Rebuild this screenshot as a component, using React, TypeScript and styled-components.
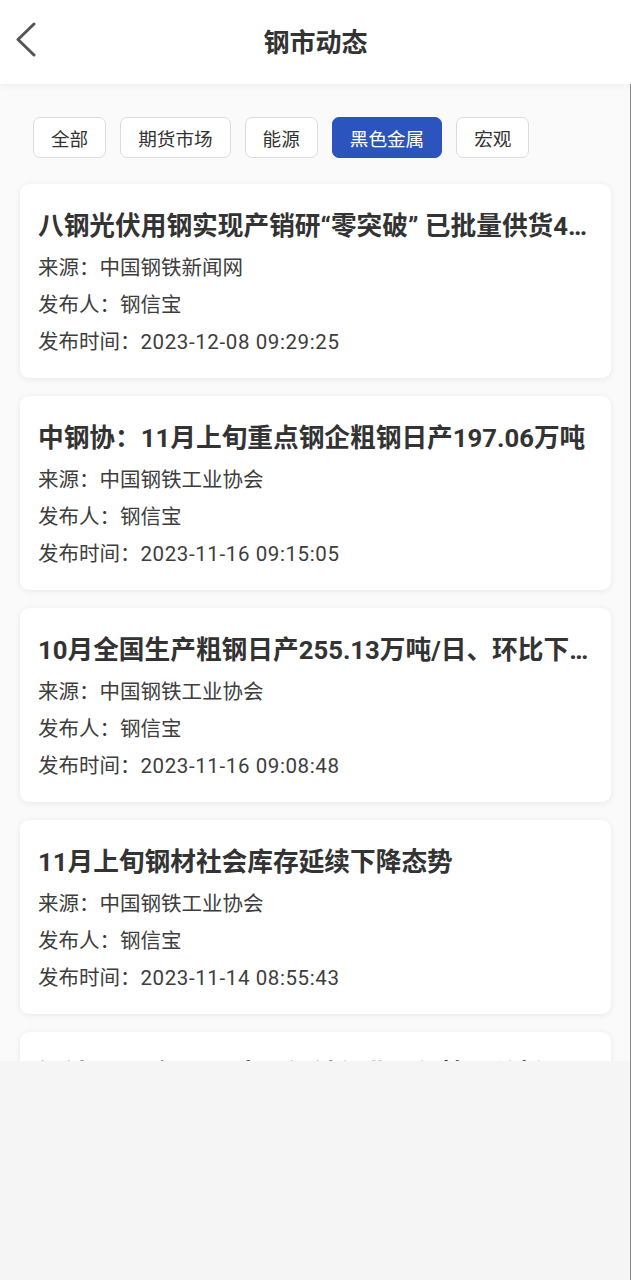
import React from 'react'
import styled, { createGlobalStyle } from 'styled-components'

interface NewsItem {
    title: string
    source: string
    publisher: string
    time: string
}

const GlobalStyle = createGlobalStyle`
    body {
        margin: 0;
        background: #f5f5f5;
        font-family: Roboto, "Noto Sans CJK SC", sans-serif;
    }
`

const Page = styled.div`
    height: 1280px;
    background: #f5f5f5;
    box-shadow: inset -1px 0 0 #8a8a8a;
    overflow: hidden;
`

const Header = styled.header`
    position: relative;
    z-index: 1;
    height: 84px;
    display: grid;
    grid-template-columns: 70px 1fr 70px;
    align-items: center;
    background: #fff;
    box-shadow: 0 2px 8px rgba(0, 0, 0, 0.05);
`

const BackButton = styled.button`
    width: 40px;
    height: 40px;
    margin: 0 0 4px 8px;
    padding: 0;
    border: none;
    background: none;
    display: flex;
    align-items: center;
    justify-content: center;
`

const Title = styled.h1`
    margin: 0 0 4px;
    text-align: center;
    font-size: 26px;
    font-weight: 700;
    color: #333;
`

const Content = styled.main`
    height: 977px;
    overflow: hidden;
    background: #fafafa;
    box-shadow: inset -1px 0 0 #8a8a8a;
`

const Tabs = styled.nav`
    display: flex;
    gap: 14px;
    padding: 33px 33px 0;
`

const Tab = styled.button<{ $active?: boolean }>`
    height: 41px;
    padding: 0 17px;
    border: 1px solid ${p => (p.$active ? '#2b54bf' : '#dcdcdc')};
    border-radius: 7px;
    background: ${p => (p.$active ? '#2b54bf' : '#fff')};
    color: ${p => (p.$active ? '#fff' : '#333')};
    font-family: inherit;
    font-size: 18.6px;
`

const List = styled.section`
    display: flex;
    flex-direction: column;
    gap: 18px;
    padding: 26px 20px 0 20px;
`

const Card = styled.article`
    padding: 24px 18px 17px;
    background: #fff;
    border-radius: 9px;
    box-shadow: 0 1px 6px rgba(0, 0, 0, 0.08);
`

const CardTitle = styled.h2`
    margin: 0 0 6px;
    font-size: 25.7px;
    line-height: 36px;
    font-weight: 700;
    color: #333;
    white-space: nowrap;
    overflow: hidden;
    text-overflow: ellipsis;
`

const Meta = styled.div`
    font-size: 20.5px;
    line-height: 37px;
    color: #3d3d3d;
`

const Stamp = styled.span`
    letter-spacing: 0.6px;
`

const news: NewsItem[] = [
    {
        title: '八钢光伏用钢实现产销研“零突破” 已批量供货4000余吨',
        source: '中国钢铁新闻网',
        publisher: '钢信宝',
        time: '2023-12-08 09:29:25',
    },
    {
        title: '中钢协：11月上旬重点钢企粗钢日产197.06万吨',
        source: '中国钢铁工业协会',
        publisher: '钢信宝',
        time: '2023-11-16 09:15:05',
    },
    {
        title: '10月全国生产粗钢日产255.13万吨/日、环比下降1.3%',
        source: '中国钢铁工业协会',
        publisher: '钢信宝',
        time: '2023-11-16 09:08:48',
    },
    {
        title: '11月上旬钢材社会库存延续下降态势',
        source: '中国钢铁工业协会',
        publisher: '钢信宝',
        time: '2023-11-14 08:55:43',
    },
    {
        title: '钢铁 2023年10月中国钢铁行业运行情况分析',
        source: '中国钢铁工业协会',
        publisher: '钢信宝',
        time: '2023-11-10 10:12:30',
    },
]

const tabs = ['全部', '期货市场', '能源', '黑色金属', '宏观']

const App: React.FC = () => {
    return (
        <Page>
            <GlobalStyle />
            <Header>
                <BackButton aria-label="返回">
                    <svg width="24" height="36" viewBox="0 0 24 36">
                        <polyline
                            points="18,2 2,17.5 18,33"
                            fill="none"
                            stroke="#555"
                            strokeWidth="3"
                            strokeLinecap="round"
                            strokeLinejoin="round"
                        />
                    </svg>
                </BackButton>
                <Title>钢市动态</Title>
                <span />
            </Header>
            <Content>
                <Tabs>
                    {tabs.map(t => (
                        <Tab key={t} $active={t === '黑色金属'}>{t}</Tab>
                    ))}
                </Tabs>
                <List>
                    {news.map(n => (
                        <Card key={n.time}>
                            <CardTitle>{n.title}</CardTitle>
                            <Meta>来源：{n.source}</Meta>
                            <Meta>发布人：{n.publisher}</Meta>
                            <Meta>发布时间：<Stamp>{n.time}</Stamp></Meta>
                        </Card>
                    ))}
                </List>
            </Content>
        </Page>
    )
}

export default App
